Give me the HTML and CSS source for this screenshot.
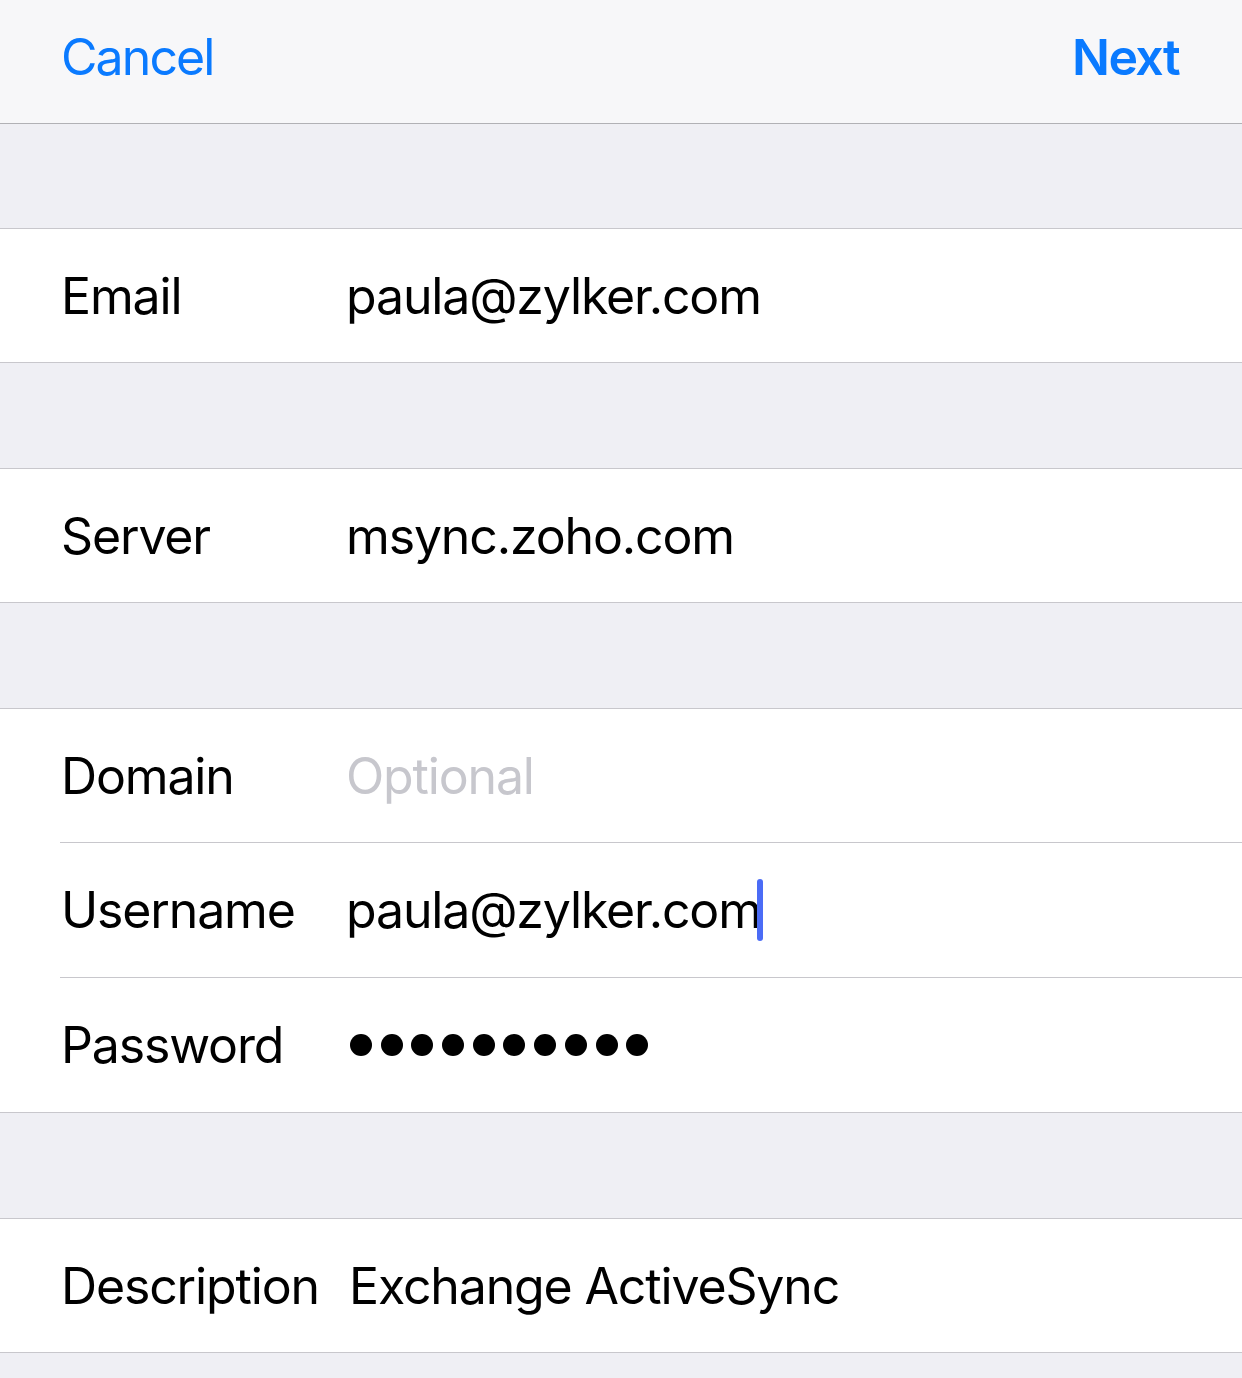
FILE: index.html
```html
<!DOCTYPE html>
<html lang="en">
<head>
<meta charset="utf-8">
<title>Exchange Account</title>
<link rel="stylesheet" href="styles.css">
</head>
<body>
<header class="navbar">
  <span class="nav-btn">Cancel</span>
  <span class="nav-btn nav-btn--bold">Next</span>
</header>

<div class="gap gap--first"></div>
<section class="group">
  <div class="row"><span class="label">Email</span><span class="value">paula@zylker.com</span></div>
</section>

<div class="gap"></div>
<section class="group">
  <div class="row"><span class="label">Server</span><span class="value">msync.zoho.com</span></div>
</section>

<div class="gap"></div>
<section class="group">
  <div class="row"><span class="label">Domain</span><span class="value value--placeholder">Optional</span></div>
  <div class="row"><span class="label">Username</span><span class="value">paula@zylker.com<span class="caret"></span></span></div>
  <div class="row"><span class="label">Password</span><span class="value dots" aria-label="password"><i class="dot"></i><i class="dot"></i><i class="dot"></i><i class="dot"></i><i class="dot"></i><i class="dot"></i><i class="dot"></i><i class="dot"></i><i class="dot"></i><i class="dot"></i></span></div>
</section>

<div class="gap"></div>
<section class="group">
  <div class="row"><span class="label">Description</span><span class="value value--desc">Exchange ActiveSync</span></div>
</section>
<div class="gap gap--end"></div>
</body>
</html>
```

FILE: styles.css
```css
html, body {
  margin: 0;
  padding: 0;
}
body {
  background: #efeff4;
  font-family: Inter, "Liberation Sans", Arial, sans-serif;
  color: #000;
  width: 1242px;
}
.navbar {
  height: 114px;
  padding: 0 62px 9px 61px;
  background: #f7f7f9;
  border-bottom: 1px solid #b1b1b5;
  display: flex;
  align-items: center;
  justify-content: space-between;
}
.nav-btn {
  color: #0a7aff;
  font-size: 50px;
  letter-spacing: -1.9px;
  line-height: 1;
}
.nav-btn--bold {
  font-weight: 600;
  letter-spacing: -1.6px;
  margin-right: 1px;
}
.gap {
  height: 105px;
}
.gap--first {
  height: 104px;
}
.gap--end {
  height: 26px;
}
.group {
  background: #fff;
  border-top: 1px solid #c8c7cc;
  border-bottom: 1px solid #c8c7cc;
}
.row {
  height: 133px;
  margin-left: 60px;
  padding-left: 1px;
  display: flex;
  align-items: center;
  font-size: 50px;
  letter-spacing: -1.15px;
  line-height: 1;
}
.row + .row {
  height: 134px;
  border-top: 1px solid #c8c7cc;
}
.label {
  width: 285px;
  flex: none;
  white-space: nowrap;
}
.value {
  white-space: nowrap;
  display: flex;
  align-items: center;
}
.value--placeholder {
  color: #c7c7cd;
}
.value--desc {
  margin-left: 3px;
}
.caret {
  display: inline-block;
  width: 6px;
  height: 62px;
  margin-left: -4px;
  border-radius: 3px;
  background: #4b6cf6;
}
.dots {
  gap: 8.7px;
  padding-left: 4px;
}
.dot {
  display: block;
  width: 22px;
  height: 22px;
  border-radius: 50%;
  background: #000;
}
```
